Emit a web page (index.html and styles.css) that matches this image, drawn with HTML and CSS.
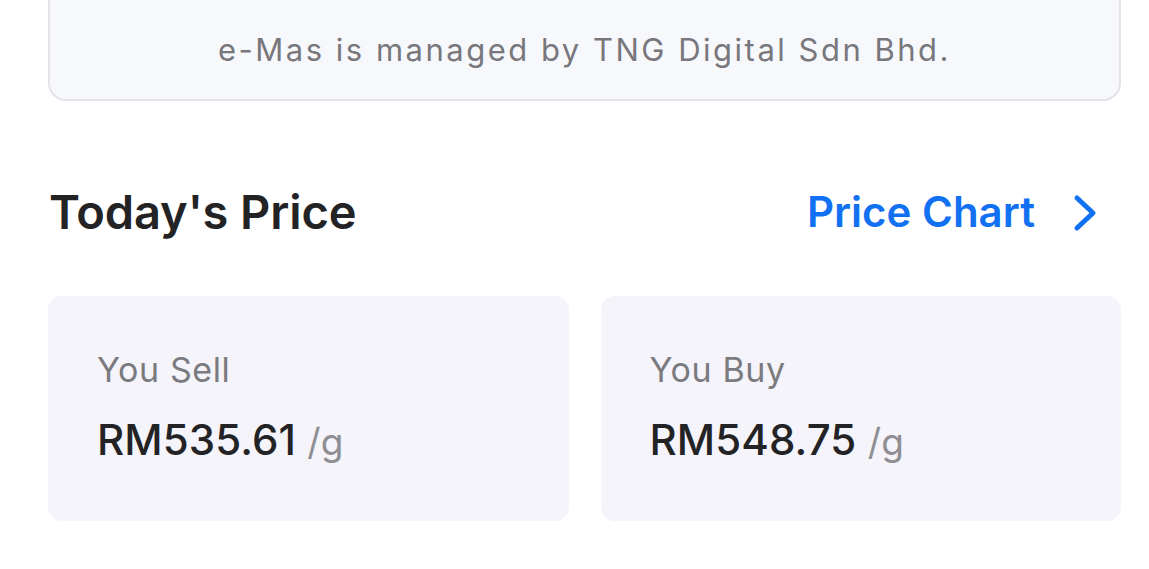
FILE: index.html
```html
<!DOCTYPE html>
<html lang="en">
<head>
<meta charset="utf-8">
<title>Today's Price</title>
<link rel="stylesheet" href="styles.css">
</head>
<body>
  <main class="page">
    <div class="notice">
      <p class="notice-text">e-Mas is managed by TNG Digital Sdn Bhd.</p>
    </div>

    <div class="section-head">
      <h2 class="section-title">Today's Price</h2>
      <a class="chart-link" href="#">
        <span>Price Chart</span>
        <svg class="chevron" width="30" height="40" viewBox="0 0 30 40" aria-hidden="true">
          <path d="M6 5 L22 20 L6 35" fill="none" stroke="currentColor" stroke-width="5" stroke-linecap="round" stroke-linejoin="round"/>
        </svg>
      </a>
    </div>

    <div class="price-grid">
      <div class="price-card">
        <div class="price-label">You Sell</div>
        <div class="price-value">RM535.61 <span class="unit">/g</span></div>
      </div>
      <div class="price-card">
        <div class="price-label">You Buy</div>
        <div class="price-value">RM548.75 <span class="unit">/g</span></div>
      </div>
    </div>
  </main>
</body>
</html>
```

FILE: styles.css
```css
* {
  box-sizing: border-box;
}

html, body {
  margin: 0;
  padding: 0;
  background: #ffffff;
}

body {
  font-family: Inter, "Noto Sans", "Liberation Sans", sans-serif;
  color: #222224;
}

.page {
  padding: 0 28px 0 48px;
}

.notice {
  background: #f7f8fc;
  border: 2px solid #e3e3e8;
  border-top: none;
  border-radius: 0 0 18px 18px;
  padding: 32px 0 31px;
  text-align: center;
}

.notice-text {
  margin: 0;
  font-size: 31px;
  line-height: 36px;
  letter-spacing: 2.5px;
  color: #77777c;
  font-weight: 400;
}

.section-head {
  display: flex;
  align-items: center;
  justify-content: space-between;
  margin-top: 82px;
  height: 58px;
}

.section-title {
  margin: 0 0 0 1px;
  font-size: 47px;
  line-height: 58px;
  font-weight: 600;
  color: #232325;
  letter-spacing: -0.1px;
}

.chart-link {
  display: flex;
  align-items: center;
  gap: 36px;
  color: #1270f2;
  text-decoration: none;
  font-size: 42px;
  font-weight: 600;
  line-height: 58px;
  margin-right: 20px;
}

.chevron {
  display: block;
  margin-top: 2px;
}

.price-grid {
  display: grid;
  grid-template-columns: 1fr 1fr;
  gap: 32px;
  margin-top: 55px;
}

.price-card {
  background: #f4f4fa;
  border-radius: 14px;
  height: 225px;
  padding: 54px 20px 0 49px;
}

.price-label {
  font-size: 34px;
  line-height: 40px;
  letter-spacing: 0.6px;
  color: #7a7a7f;
}

.price-value {
  margin-top: 26px;
  font-size: 42px;
  line-height: 48px;
  font-weight: 500;
  color: #232325;
  letter-spacing: 0.1px;
}

.unit {
  font-size: 37px;
  font-weight: 400;
  color: #8e8e93;
}
```
